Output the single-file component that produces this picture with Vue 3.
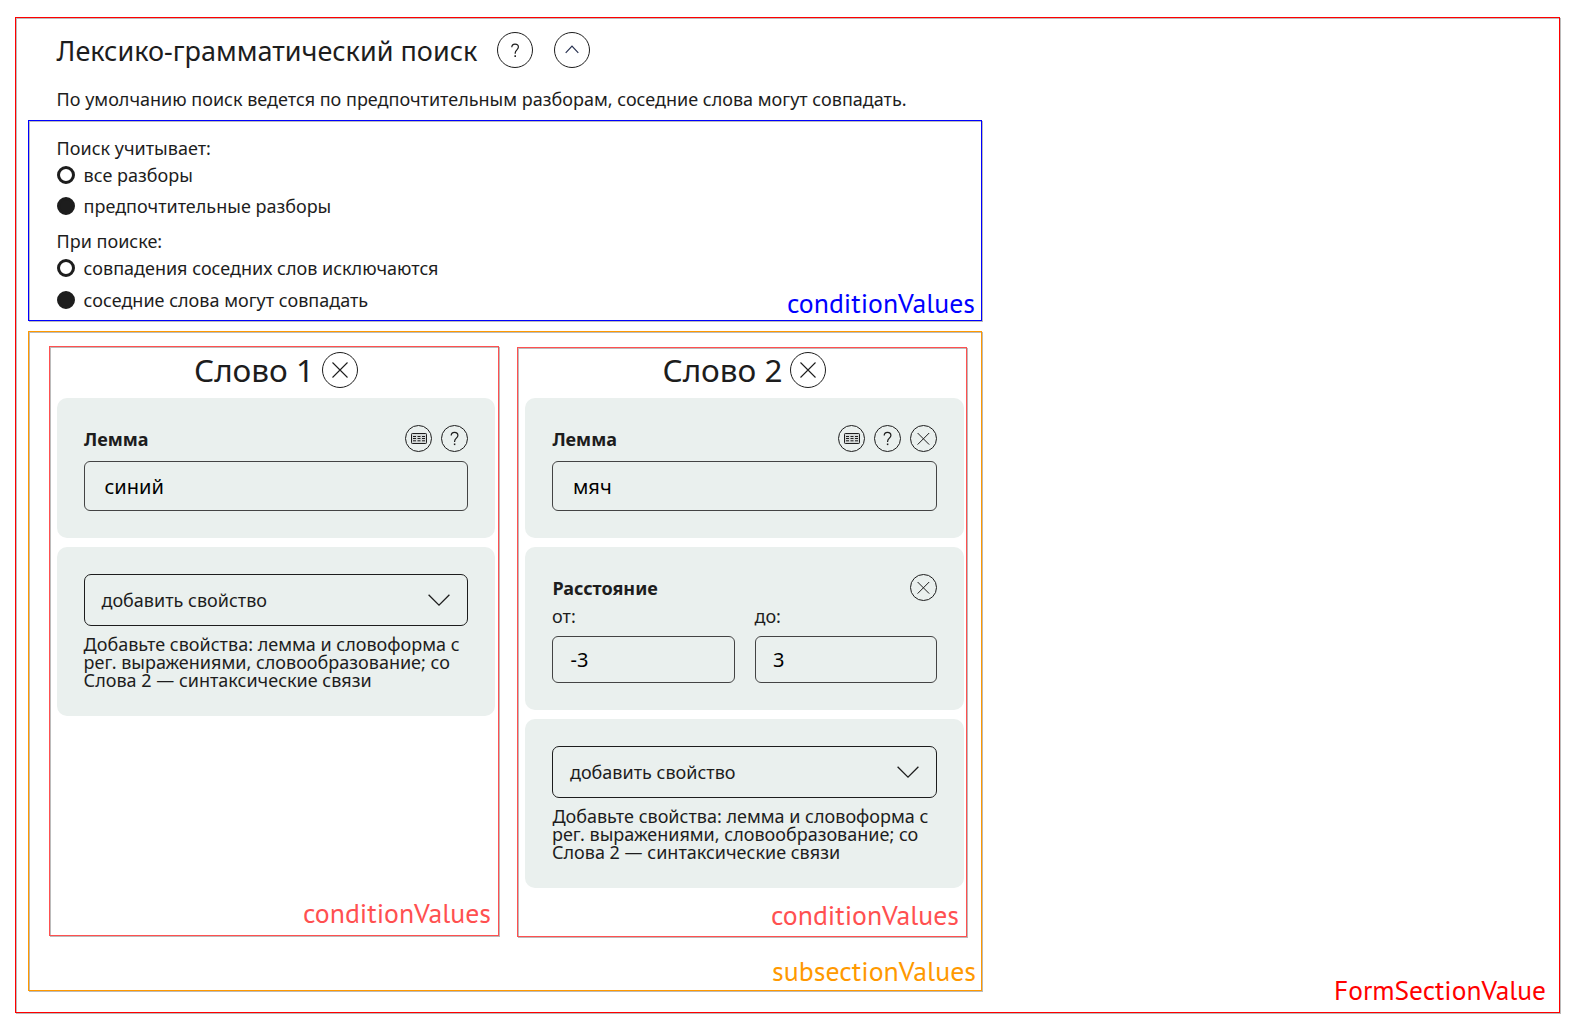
<script setup>
import { h } from 'vue'

const groups = [
  { title: 'Поиск учитывает:', cls: 'first', options: [['все разборы', false], ['предпочтительные разборы', true]] },
  { title: 'При поиске:', cls: 'second', options: [['совпадения соседних слов исключаются', false], ['соседние слова могут совпадать', true]] },
]

const words = [
  { n: 1, lemma: 'синий', icons: ['keyboard', 'help'], distance: null },
  { n: 2, lemma: 'мяч', icons: ['keyboard', 'help', 'close'], distance: { from: '-3', to: '3' } },
]

const glyphs = {
  help: () => [
    h('path', { d: 'M10.2 10.6c0-2 1.3-3.3 3.3-3.3s3.4 1.2 3.4 3.1c0 2.6-3.3 2.9-3.3 6v.6', 'stroke-width': 1.2 }),
    h('path', { d: 'M13.6 18.5v1.6', 'stroke-width': 1.5 }),
  ],
  close: () => [h('path', { d: 'M7.6 8l11.6 11.6M19.2 8L7.6 19.6' })],
  keyboard: () => [
    h('rect', { x: 6.5, y: 8.5, width: 15, height: 10, rx: 0.8, fill: '#d3d8d7' }),
    h('path', { d: 'M8 11.5h3M12.5 11.5h3M17 11.5h3M8 13.5h3M12.5 13.5h3M17 13.5h3M8 15.8h3M12.5 15.8h3M17 15.8h3' }),
  ],
}
const Icon = (p) => h('svg', { viewBox: '0 0 27 27', width: 27, height: 27, fill: 'none', stroke: '#1d1d1d', 'stroke-width': 1 }, glyphs[p.name]())
Icon.props = ['name']

const Tag = (p) => h('svg', { width: p.w, height: 34, 'aria-label': p.text }, [
  h('text', { x: 0, y: 26, textLength: p.w, lengthAdjust: 'spacingAndGlyphs', fill: 'currentColor' }, p.text),
])
Tag.props = ['text', 'w']
</script>

<template>
  <main class="page">
    <section class="frame form">
      <header class="head">
        <h1>Лексико-грамматический поиск</h1>
        <button class="round big">
          <svg width="34" height="34" viewBox="0 0 34 34" fill="none" stroke="#1d1d1d" stroke-width="1.2"><path d="M13.8 14.3c0-2 1.3-3.2 3.2-3.2s3.4 1.1 3.4 3c0 2.6-3.2 2.9-3.2 5.9v.8" /><path d="M17.2 22.3v1.6" stroke-width="1.5" /></svg>
        </button>
        <button class="round big">
          <svg width="34" height="34" viewBox="0 0 34 34" fill="none" stroke="#26304f" stroke-width="1.2"><path d="M10.7 19.8l6.3-6.6 6.3 6.6" /></svg>
        </button>
      </header>
      <p class="intro">По умолчанию поиск ведется по предпочтительным разборам, соседние слова могут совпадать.</p>

      <div class="frame settings">
        <div v-for="g in groups" :key="g.title" :class="['group', g.cls]">
          <div class="legend">{{ g.title }}</div>
          <label v-for="[text, on] in g.options" :key="text" class="option">
            <span :class="['radio', { on }]"></span>{{ text }}
          </label>
        </div>
        <Tag class="tag" text="conditionValues" :w="188" />
      </div>

      <div class="frame subsections">
        <div v-for="w in words" :key="w.n" :class="['frame', 'word', 'word-' + w.n]">
          <div class="word-title">
            <h2>Слово {{ w.n }}</h2>
            <button class="round big">
              <svg width="34" height="34" viewBox="0 0 34 34" fill="none" stroke="#1d1d1d" stroke-width="1.1"><path d="M9.5 9.5l15 15M24.5 9.5l-15 15" /></svg>
            </button>
          </div>
          <div class="card">
            <div class="card-head">
              <b>Лемма</b>
              <button v-for="i in w.icons" :key="i" class="round"><Icon :name="i" /></button>
            </div>
            <div class="input">{{ w.lemma }}</div>
          </div>
          <div v-if="w.distance" class="card">
            <div class="card-head">
              <b>Расстояние</b>
              <button class="round"><Icon name="close" /></button>
            </div>
            <div class="range">
              <label>от:<span class="input small">{{ w.distance.from }}</span></label>
              <label>до:<span class="input small">{{ w.distance.to }}</span></label>
            </div>
          </div>
          <div class="card">
            <div class="select">
              <span>добавить свойство</span>
              <svg width="22" height="13" viewBox="0 0 22 13" fill="none" stroke="#1d1d1d" stroke-width="1.3"><path d="M.6.8L11 11.2 21.4.8" /></svg>
            </div>
            <p class="hint">Добавьте свойства: лемма и словоформа с рег. выражениями, словообразование; со Слова 2 — синтаксические связи</p>
          </div>
          <Tag class="tag" text="conditionValues" :w="188" />
        </div>
        <Tag class="tag" text="subsectionValues" :w="204" />
      </div>
      <Tag class="tag" text="FormSectionValue" :w="212" />
    </section>
  </main>
</template>

<style>
body { margin: 0; background: #fff; }
</style>

<style scoped>
.page {
  box-sizing: border-box;
  height: 1036px;
  padding: 17px 0 0 15px;
  overflow: hidden;
  font: 18px/18px "Noto Sans", "Open Sans", sans-serif;
  color: #1d1d1d;
}
.page * { box-sizing: border-box; }
.frame {
  position: relative;
  border: 1px solid currentColor;
  box-shadow: 1px 1px 0 #bbb, inset 1px 1px 0 #bbb;
}
.form { width: 1545px; height: 996px; padding-top: 14px; border-color: #f00; }
.head { display: flex; height: 36px; padding-left: 40.6px; }
h1 { margin: 0 19.5px 0 0; font-size: 27px; font-weight: 400; line-height: 38px; white-space: nowrap; }
.head .round + .round { margin-left: 21px; }
.round {
  flex: none;
  display: flex;
  align-items: center;
  justify-content: center;
  width: 27px;
  height: 27px;
  padding: 0;
  border: 1px solid #1d1d1d;
  border-radius: 50%;
  background: none;
}
.round.big { width: 36px; height: 36px; }
.round svg { flex: none; display: block; }
.intro { margin: 19px 0 9px 40.6px; line-height: 24px; white-space: nowrap; }
.settings { width: 954px; height: 201px; margin-left: 12px; padding: 18px 0 0 27.6px; border-color: #00f; }
.option { display: flex; align-items: center; gap: 9px; margin-top: 9px; }
.option + .option { margin-top: 13px; }
.second { margin-top: 17px; }
.second .option + .option { margin-top: 14px; }
.radio { width: 18px; height: 18px; border: 3px solid #1d1d1d; border-radius: 50%; }
.radio.on { background: #1d1d1d; }
.subsections {
  display: flex;
  gap: 18px;
  width: 954px;
  height: 660px;
  margin: 10px 0 0 12px;
  padding: 14px 0 0 20px;
  border-color: #ff9900;
}
.word { flex: none; width: 450px; height: 590px; padding: 5px 3px 0 7px; border-color: #ff5050; }
.word-2 { margin-top: 1px; padding: 4px 2px 0 7px; }
.word-title { display: flex; justify-content: center; gap: 8px; height: 36px; margin-bottom: 10px; }
.word-2 .word-title { gap: 7px; padding-right: 1px; }
h2 { margin: 0; font-size: 31.5px; font-weight: 400; line-height: 36px; white-space: nowrap; }
.card { margin-bottom: 9px; padding: 27px; border-radius: 10px; background: #eaf0ee; }
.card-head { display: flex; gap: 9px; height: 27px; }
.card-head b { flex: 1; line-height: 28px; }
.word-2 .card-head b, .word-2 .hint { text-indent: .4px; }
.input {
  display: block;
  height: 50px;
  margin-top: 9px;
  padding-left: 20px;
  border: 1px solid #444;
  border-radius: 6px;
  font-size: 20px;
  line-height: 50px;
  color: #000;
}
.word-1 .input { padding-left: 19.5px; }
.range { display: grid; grid-template-columns: 1fr 1fr; gap: 20px; margin-top: 6px; }
.input.small { height: 47px; margin-top: 11px; padding-left: 17.5px; line-height: 45px; }
.select {
  display: flex;
  align-items: center;
  justify-content: space-between;
  height: 52px;
  padding: 0 17px;
  border: 1px solid #1d1d1d;
  border-radius: 7px;
}
.word-1 .select { padding-left: 16.5px; }
.hint { margin: 9px 0 0; white-space: normal; }
.word-1 .hint { margin-left: -.4px; }
.tag {
  position: absolute;
  right: 7px;
  bottom: 0;
  overflow: visible;
  font: 28px "PT Sans", "Noto Sans", sans-serif;
}
.settings > .tag { color: #00f; right: 6px; bottom: -1px; }
.word > .tag { color: #ff5050; right: 7px; bottom: 4px; }
.word-2 > .tag { bottom: 3px; }
.subsections > .tag { color: #ff9900; right: 5px; bottom: 1px; }
.form > .tag { color: #f00; right: 13px; bottom: 4px; }
</style>
